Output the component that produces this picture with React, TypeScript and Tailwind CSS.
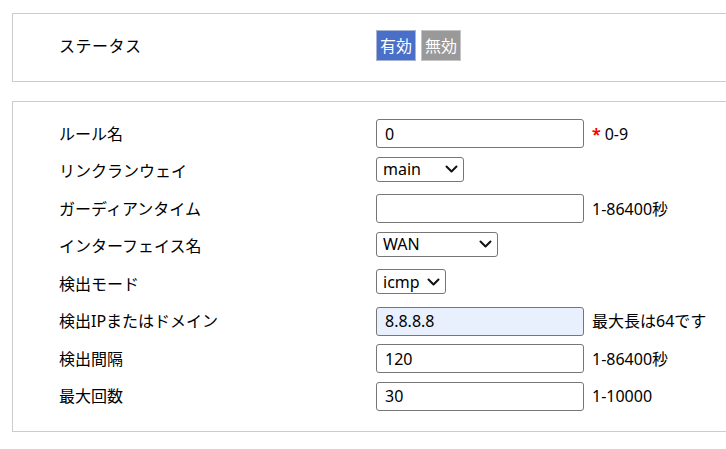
import React from 'react';

const font = { fontFamily: '"Noto Sans", "Noto Sans CJK JP", sans-serif' };

const Chevron: React.FC = () => (
  <svg width="13" height="8" viewBox="0 0 13 8" className="shrink-0">
    <path d="M1.5 1.5 L6.5 6.5 L11.5 1.5" fill="none" stroke="#111" strokeWidth="2" strokeLinecap="round" strokeLinejoin="round" />
  </svg>
);

const TextBox: React.FC<{ value: string; filled?: boolean }> = ({ value, filled }) => (
  <div
    className={`w-[208px] h-[29px] border border-[#767676] rounded-[3px] pl-2 flex items-center text-[16px] text-black ${
      filled ? 'bg-[#e8f0fe]' : 'bg-white'
    }`}
  >
    {value}
  </div>
);

const SelectBox: React.FC<{ value: string; width: string }> = ({ value, width }) => (
  <div
    className={`${width} h-[25px] mb-[4px] border border-[#767676] rounded-[3px] pl-[6px] pr-[5px] flex items-center justify-between gap-1 text-[16px] text-black bg-white`}
  >
    <span>{value}</span>
    <Chevron />
  </div>
);

type Row = { label: string; control: React.ReactNode; hint?: React.ReactNode };

const rows: Row[] = [
  {
    label: 'ルール名',
    control: <TextBox value="0" />,
    hint: (
      <>
        <span className="text-[#ff0000] font-bold mr-1">*</span>0-9
      </>
    ),
  },
  { label: 'リンクランウェイ', control: <SelectBox value="main" width="w-[88px]" /> },
  { label: 'ガーディアンタイム', control: <TextBox value="" />, hint: '1-86400秒' },
  { label: 'インターフェイス名', control: <SelectBox value="WAN" width="w-[122px]" /> },
  { label: '検出モード', control: <SelectBox value="icmp" width="w-[70px]" /> },
  { label: '検出IPまたはドメイン', control: <TextBox value="8.8.8.8" filled />, hint: '最大長は64です' },
  { label: '検出間隔', control: <TextBox value="120" />, hint: '1-86400秒' },
  { label: '最大回数', control: <TextBox value="30" />, hint: '1-10000' },
];

export default function App() {
  return (
    <div className="w-[726px] h-[449px] overflow-hidden bg-white text-[16px] text-black" style={font}>
      {/* Status panel */}
      <div className="ml-3 mt-[13px] w-[730px] border border-[#cccccc] pt-[16px] pb-[20px]">
        <div className="flex items-center h-[31px]">
          <div className="w-[363px] pl-[46px] tracking-[0.5px]">ステータス</div>
          <div className="flex items-center gap-[5px]">
            <div className="h-[31px] px-[3px] flex items-center bg-[#4a6fc8] border border-[#a8b4d4] text-white">有効</div>
            <div className="h-[31px] px-[3px] flex items-center bg-[#999999] border border-[#c4c4c4] text-white">無効</div>
          </div>
        </div>
      </div>

      {/* Rule settings panel */}
      <div className="ml-3 mt-[19px] w-[730px] border border-[#cccccc] pt-[13px] pb-[16px]">
        {rows.map((r) => (
          <div key={r.label} className="flex items-center h-[37.5px]">
            <div className="w-[363px] pl-[46px]">{r.label}</div>
            {r.control}
            {r.hint && <div className="ml-[8px] flex items-center">{r.hint}</div>}
          </div>
        ))}
      </div>
    </div>
  );
}
